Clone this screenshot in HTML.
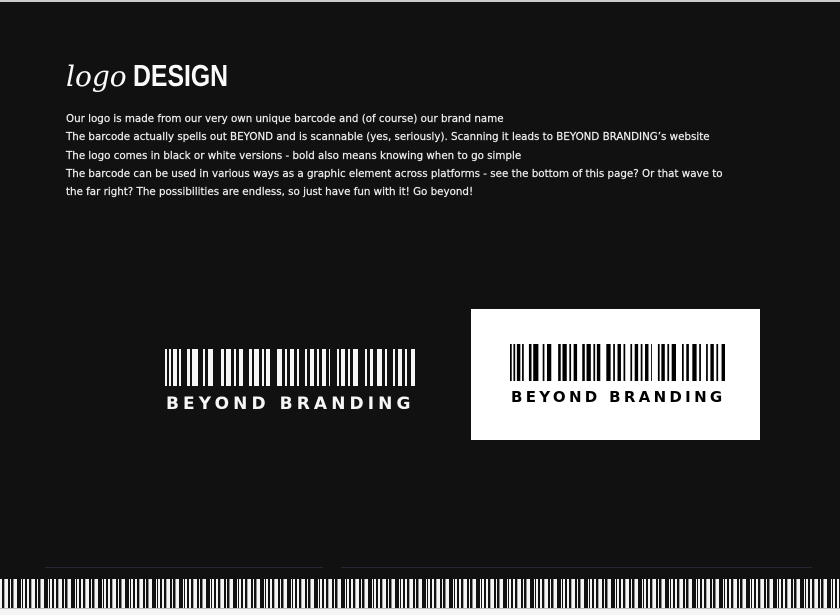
<!DOCTYPE html>
<html><head><meta charset="utf-8"><style>
html,body{margin:0;padding:0;}
body{width:840px;height:614px;background:#111;position:relative;overflow:hidden;font-family:"DejaVu Sans","Liberation Sans",sans-serif;}
.top{position:absolute;left:0;top:0;width:840px;height:2px;background:#ccc;}
h1{position:absolute;left:66px;top:56px;margin:0;color:#fafafa;font-size:31px;line-height:40px;font-weight:normal;white-space:nowrap;}
h1 i{font-family:"DejaVu Serif","Liberation Serif",serif;font-style:italic;font-size:28px;}
h1 b{position:absolute;left:67px;top:0;font-family:"Liberation Sans",sans-serif;font-weight:bold;font-size:31px;transform:scaleX(0.8);display:inline-block;transform-origin:left;}
.p{position:absolute;left:66px;top:110px;color:#f0f0f0;font-size:10.3px;line-height:18.3px;white-space:nowrap;-webkit-text-stroke:0.2px #f0f0f0;}
.lbl{position:absolute;font-family:"DejaVu Sans",sans-serif;font-weight:bold;white-space:nowrap;}
.box{position:absolute;left:471px;top:309px;width:289px;height:131px;background:#fff;}
.line{position:absolute;top:567px;height:1px;background:#2a2530;}
.bc{position:absolute;left:0;top:579px;width:840px;height:29px;
background:repeating-linear-gradient(90deg,#f4f4f4 0 2px,#111 2px 4px,#aaa 4px 5px,#f4f4f4 5px 8px,#111 8px 10px,#f4f4f4 10px 11px,#111 11px 13px,#888 13px 14px,#f4f4f4 14px 17px,#111 17px 21px,#f4f4f4 21px 22px,#111 22px 23px,#f4f4f4 23px 25px,#111 25px 27px);}
.bot{position:absolute;left:0;top:608px;width:840px;height:6px;background:#f4f4f4;border-top:1px solid #bbb;}
</style></head><body>
<div class="top"></div>
<h1><i>logo</i> <b>DESIGN</b></h1>
<div class="p">Our logo is made from our very own unique barcode and (of course) our brand name<br>The barcode actually spells out BEYOND and is scannable (yes, seriously). Scanning it leads to BEYOND BRANDING’s website<br>The logo comes in black or white versions - bold also means knowing when to go simple<br>The barcode can be used in various ways as a graphic element across platforms - see the bottom of this page? Or that wave to<br>the far right? The possibilities are endless, so just have fun with it! Go beyond!</div>

<svg width="0" height="0" style="position:absolute"><defs><g id="bars">
<rect x="0" width="2" height="10"/><rect x="4" width="2" height="10"/><rect x="8" width="4" height="10"/><rect x="14" width="2" height="10"/>
<rect x="22" width="3" height="10"/><rect x="27" width="6" height="10"/><rect x="38" width="2" height="10"/><rect x="43" width="5" height="10"/>
<rect x="56" width="3" height="10"/><rect x="61" width="5" height="10"/><rect x="69" width="2" height="10"/><rect x="74" width="4" height="10"/>
<rect x="84" width="3" height="10"/><rect x="89" width="5" height="10"/><rect x="97" width="2" height="10"/><rect x="101" width="4" height="10"/>
<rect x="112" width="5" height="10"/><rect x="120" width="2" height="10"/><rect x="125" width="4" height="10"/><rect x="132" width="2" height="10"/>
<rect x="140" width="2" height="10"/><rect x="145" width="4" height="10"/><rect x="152" width="2" height="10"/><rect x="157" width="4" height="10"/><rect x="164" width="1" height="10"/>
<rect x="172" width="2" height="10"/><rect x="176" width="4" height="10"/><rect x="183" width="2" height="10"/><rect x="188" width="5" height="10"/>
<rect x="200" width="2" height="10"/><rect x="205" width="3" height="10"/><rect x="212" width="5" height="10"/><rect x="220" width="2" height="10"/>
<rect x="228" width="2" height="10"/><rect x="233" width="4" height="10"/><rect x="240" width="2" height="10"/><rect x="246" width="4" height="10"/>
</g></defs></svg>

<svg style="position:absolute;left:165px;top:349px" width="250" height="37" viewBox="0 0 250 10" preserveAspectRatio="none"><use href="#bars" fill="#f6f6f6"/></svg>
<div class="lbl" style="left:166px;top:394px;color:#f6f6f6;font-size:17px;letter-spacing:4.1px;">BEYOND BRANDING</div>

<div class="box"></div>
<svg style="position:absolute;left:510px;top:344px" width="215" height="37" viewBox="0 0 250 10" preserveAspectRatio="none"><use href="#bars" fill="#000"/></svg>
<div class="lbl" style="left:511px;top:388px;color:#000;font-size:15px;letter-spacing:3.3px;">BEYOND BRANDING</div>

<div class="line" style="left:45px;width:278px"></div>
<div class="line" style="left:341px;width:471px"></div>
<div class="bc"></div>
<div class="bot"></div>
</body></html>
